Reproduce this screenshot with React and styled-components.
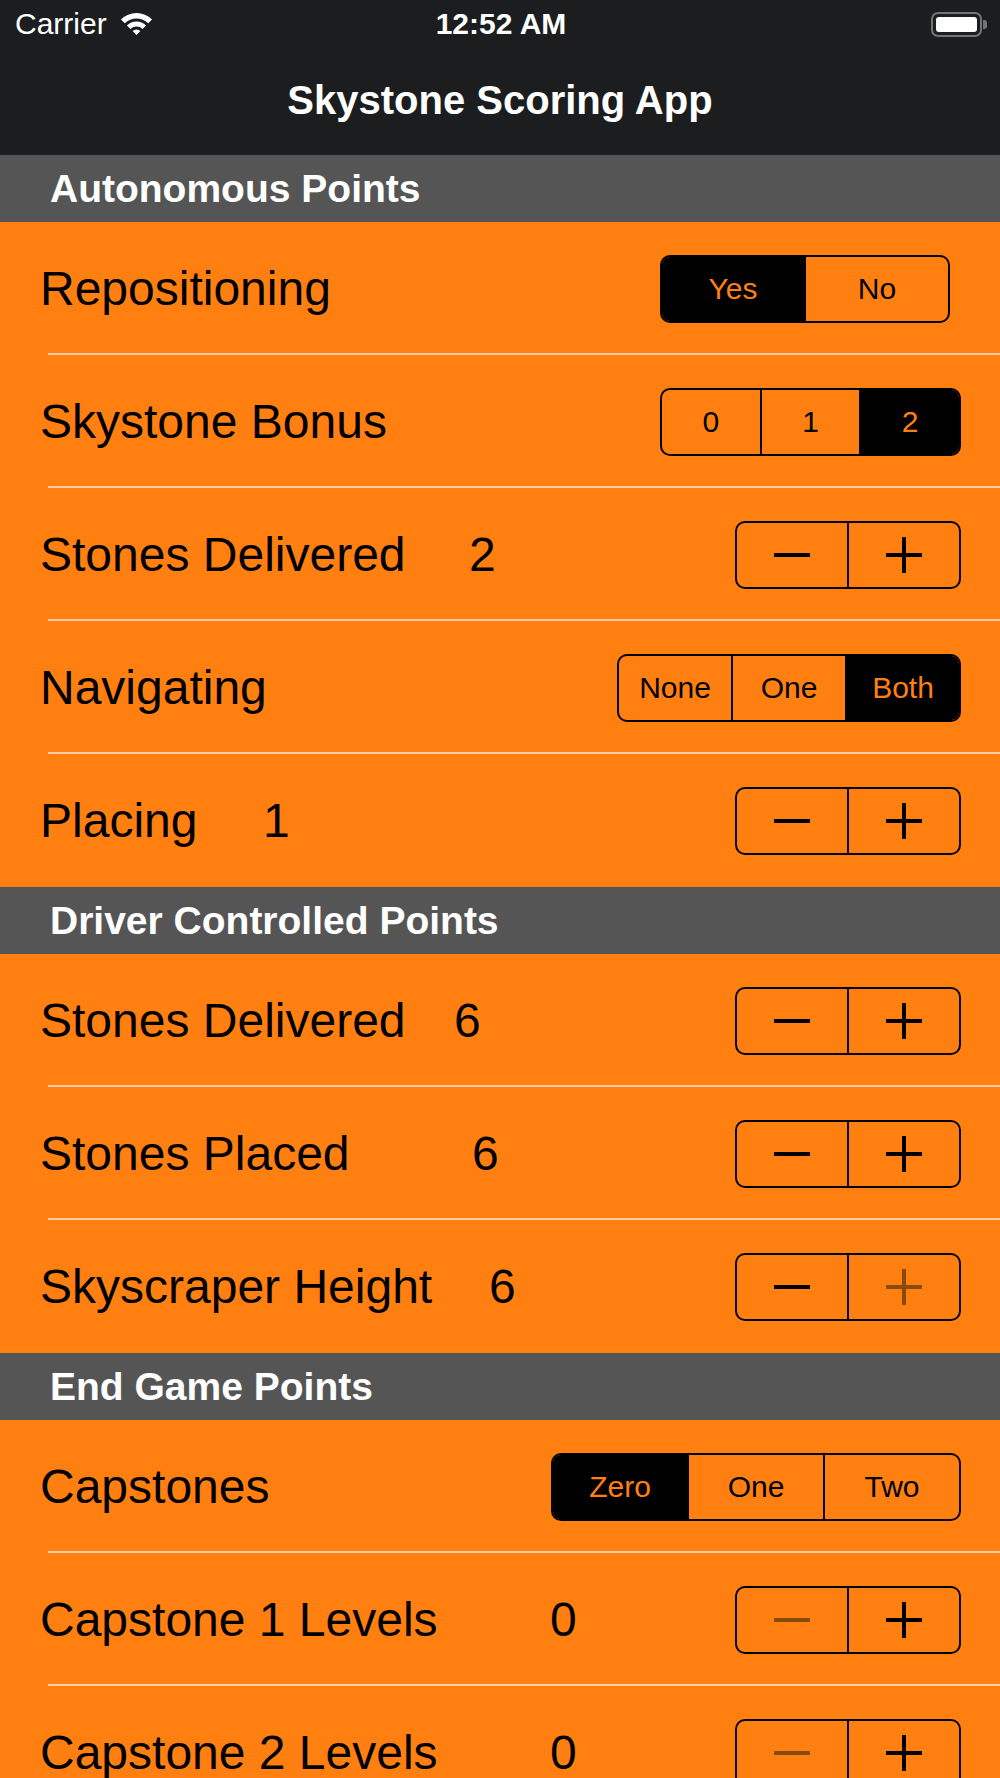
import React from 'react'
import styled, { createGlobalStyle } from 'styled-components'

const ORANGE = '#ff7f11'
const DISABLED = '#8a4a0c'

const GlobalStyle = createGlobalStyle`
  html, body {
    margin: 0;
    padding: 0;
    overflow: hidden;
    background: ${ORANGE};
  }
  body {
    font-family: "Liberation Sans", Arial, sans-serif;
  }
`

const Screen = styled.div`
  width: 1000px;
  height: 1778px;
  overflow: hidden;
  background: ${ORANGE};
`

const TopBar = styled.header`
  background: #1b1d1f;
  color: #fff;
`

const StatusBar = styled.div`
  height: 48px;
  display: grid;
  grid-template-columns: 1fr auto 1fr;
  align-items: center;
  padding: 0 13px 0 15px;
  font-size: 30px;
`

const Carrier = styled.div`
  display: flex;
  align-items: center;
  gap: 12px;
`

const Clock = styled.div`
  font-weight: 700;
`

const BatteryWrap = styled.div`
  justify-self: end;
  display: flex;
  align-items: center;
  gap: 1px;
`

const BatteryBody = styled.div`
  width: 51px;
  height: 25px;
  box-sizing: border-box;
  border: 2px solid #737373;
  border-radius: 7px;
  padding: 3px;
  display: flex;
`

const BatteryFill = styled.div`
  flex: 1;
  background: #fff;
  border-radius: 3px;
`

const BatteryNub = styled.div`
  width: 4px;
  height: 9px;
  background: #737373;
  border-radius: 0 3px 3px 0;
`

const NavBar = styled.div`
  height: 107px;
  display: flex;
  align-items: center;
  justify-content: center;
  font-size: 40px;
  font-weight: 700;
  padding-bottom: 2px;
  box-sizing: border-box;
`

const SectionHeader = styled.div`
  height: 67px;
  background: #555555;
  color: #fff;
  font-size: 39px;
  font-weight: 700;
  display: flex;
  align-items: center;
  padding-left: 50px;
`

const Row = styled.div`
  position: relative;
  height: 133px;
  display: flex;
  align-items: center;
  padding: 0 39px 0 40px;
  color: #000;
  font-size: 48px;

  &:not(:last-child)::after {
    content: '';
    position: absolute;
    left: 48px;
    right: 0;
    bottom: 0;
    height: 2px;
    background: rgba(255, 255, 255, 0.6);
  }
`

const Label = styled.div`
  width: ${p => (p.$w ? `${p.$w}px` : 'auto')};
  white-space: nowrap;
`

const Value = styled.div`
  flex: 1;
`

const Segmented = styled.div`
  margin-left: auto;
  margin-right: ${p => p.$mr || 0}px;
  width: ${p => p.$w}px;
  height: 68px;
  box-sizing: border-box;
  border: 2.5px solid #000;
  border-radius: 10px;
  overflow: hidden;
  display: flex;
`

const Segment = styled.div`
  flex: 1;
  display: flex;
  align-items: center;
  justify-content: center;
  font-size: 30px;
  background: ${p => (p.$on ? '#000' : 'transparent')};
  color: ${p => (p.$on ? ORANGE : '#000')};
  & + & {
    border-left: 2.5px solid #000;
  }
`

function SegmentedControl({ options, selected, width, mr }) {
  return (
    <Segmented $w={width} $mr={mr}>
      {options.map((o, i) => (
        <Segment key={o} $on={i === selected}>{o}</Segment>
      ))}
    </Segmented>
  )
}

function MinusIcon({ color }) {
  return (
    <svg width="38" height="38" viewBox="0 0 38 38">
      <path d="M1 19 H37" stroke={color} strokeWidth="4" />
    </svg>
  )
}

function PlusIcon({ color }) {
  return (
    <svg width="38" height="38" viewBox="0 0 38 38">
      <path d="M1 19 H37 M19 1 V37" stroke={color} strokeWidth="4" />
    </svg>
  )
}

function Stepper({ minusOff, plusOff }) {
  return (
    <Segmented $w={226}>
      <Segment>
        <MinusIcon color={minusOff ? DISABLED : '#000'} />
      </Segment>
      <Segment>
        <PlusIcon color={plusOff ? DISABLED : '#000'} />
      </Segment>
    </Segmented>
  )
}

function WifiIcon() {
  return (
    <svg width="35" height="24" viewBox="0 0 34 24" fill="#fff">
      <path d="M1.44 7.44 A22 22 0 0 1 32.56 7.44 L28.67 11.33 A16.5 16.5 0 0 0 5.33 11.33 Z" />
      <path d="M7.45 13.45 A13.5 13.5 0 0 1 26.55 13.45 L23.01 16.99 A8.5 8.5 0 0 0 10.99 16.99 Z" />
      <path d="M13.11 19.11 A5.5 5.5 0 0 1 20.89 19.11 L17 23 Z" />
    </svg>
  )
}

function CountRow({ label, value, labelWidth, minusOff, plusOff }) {
  return (
    <Row>
      <Label $w={labelWidth}>{label}</Label>
      <Value>{value}</Value>
      <Stepper minusOff={minusOff} plusOff={plusOff} />
    </Row>
  )
}

function ChoiceRow({ label, options, selected, width, mr }) {
  return (
    <Row>
      <Label>{label}</Label>
      <SegmentedControl options={options} selected={selected} width={width} mr={mr} />
    </Row>
  )
}

export default function App() {
  return (
    <Screen>
      <GlobalStyle />
      <TopBar>
        <StatusBar>
          <Carrier>
            Carrier
            <WifiIcon />
          </Carrier>
          <Clock>12:52 AM</Clock>
          <BatteryWrap>
            <BatteryBody>
              <BatteryFill />
            </BatteryBody>
            <BatteryNub />
          </BatteryWrap>
        </StatusBar>
        <NavBar>Skystone Scoring App</NavBar>
      </TopBar>

      <SectionHeader>Autonomous Points</SectionHeader>
      <div>
        <ChoiceRow label="Repositioning" options={['Yes', 'No']} selected={0} width={290} mr={11} />
        <ChoiceRow label="Skystone Bonus" options={['0', '1', '2']} selected={2} width={301} />
        <CountRow label="Stones Delivered" value="2" labelWidth={429} />
        <ChoiceRow label="Navigating" options={['None', 'One', 'Both']} selected={2} width={344} />
        <CountRow label="Placing" value="1" labelWidth={223} />
      </div>

      <SectionHeader>Driver Controlled Points</SectionHeader>
      <div>
        <CountRow label="Stones Delivered" value="6" labelWidth={414} />
        <CountRow label="Stones Placed" value="6" labelWidth={432} />
        <CountRow label="Skyscraper Height" value="6" labelWidth={449} plusOff />
      </div>

      <SectionHeader>End Game Points</SectionHeader>
      <div>
        <ChoiceRow label="Capstones" options={['Zero', 'One', 'Two']} selected={0} width={410} />
        <CountRow label="Capstone 1 Levels" value="0" labelWidth={510} minusOff />
        <CountRow label="Capstone 2 Levels" value="0" labelWidth={510} minusOff />
      </div>
    </Screen>
  )
}
